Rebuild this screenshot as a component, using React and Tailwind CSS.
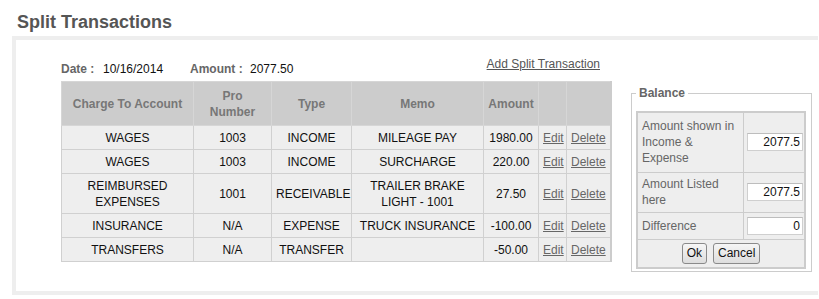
const rows = [
  { account: 'WAGES', pro: '1003', type: 'INCOME', memo: 'MILEAGE PAY', amount: '1980.00', h: 'h-[24px]' },
  { account: 'WAGES', pro: '1003', type: 'INCOME', memo: 'SURCHARGE', amount: '220.00', h: 'h-[24px]' },
  { account: ['REIMBURSED', 'EXPENSES'], pro: '1001', type: 'RECEIVABLE', memo: ['TRAILER BRAKE', 'LIGHT - 1001'], amount: '27.50', h: 'h-[40px]' },
  { account: 'INSURANCE', pro: 'N/A', type: 'EXPENSE', memo: 'TRUCK INSURANCE', amount: '-100.00', h: 'h-[24px]' },
  { account: 'TRANSFERS', pro: 'N/A', type: 'TRANSFER', memo: '', amount: '-50.00', h: 'h-[24px]' },
]

function Lines({ v }) {
  if (Array.isArray(v)) return v.map((l, i) => <div key={i}>{l}</div>)
  return v
}

export default function App() {
  const td = 'border border-[#d0d0d0] text-center align-middle px-1'
  const th = 'border border-[#d6d6d6] text-center align-middle font-bold text-[#777] px-1'
  const input = 'w-[56px] h-[18px] border border-[#cfcfcf] border-t-[#bdbdbd] bg-white text-right pr-[2px] text-[12px] text-[#111] outline-none'
  const btn = 'h-[21px] px-[4px] rounded-[3px] border border-[#8a8a8a] bg-gradient-to-b from-[#f6f6f6] to-[#dddddd] text-[12px] text-[#111]'
  return (
    <div className="w-[819px] h-[299px] overflow-hidden bg-white font-['Liberation_Sans',Arial,sans-serif] text-[12px] leading-4 text-[#111]">
      <div className="pt-[10px] pl-[17px]">
        <h1 className="text-[18px] leading-[24px] font-bold text-[#555]">Split Transactions</h1>
      </div>
      <div className="mt-[2px] ml-[12px] w-[806px] h-[259px] border-[4px] border-r-0 border-[#eeeeee] flex">
        <div className="ml-[45px] w-[549px] flex flex-col">
          <div className="pt-[16px] flex justify-between">
            <div className="mt-[5px] flex">
              <span className="w-[42px] font-bold text-[#666]">Date :</span>
              <span className="w-[87px]">10/16/2014</span>
              <span className="w-[60px] font-bold text-[#666]">Amount :</span>
              <span>2077.50</span>
            </div>
            <a href="#" className="mr-[10px] text-[#555] underline">Add Split Transaction</a>
          </div>
          <table className="mt-[4px] w-[549px] border-collapse border-r-2 border-r-[#cccccc] table-fixed">
            <colgroup>
              <col className="w-[132px]" />
              <col className="w-[78px]" />
              <col className="w-[80px]" />
              <col className="w-[132px]" />
              <col className="w-[55px]" />
              <col className="w-[28px]" />
              <col className="w-[44px]" />
            </colgroup>
            <thead>
              <tr className="h-[44px] bg-[#cccccc]">
                <th className={th}>Charge To Account</th>
                <th className={th}>Pro<br />Number</th>
                <th className={th}>Type</th>
                <th className={th}>Memo</th>
                <th className={th}>Amount</th>
                <th className={th}></th>
                <th className={th}></th>
              </tr>
            </thead>
            <tbody>
              {rows.map((r, i) => (
                <tr key={i} className={`${r.h} bg-[#eeeeee]`}>
                  <td className={td}><Lines v={r.account} /></td>
                  <td className={td}>{r.pro}</td>
                  <td className={td}>{r.type}</td>
                  <td className={td}><Lines v={r.memo} /></td>
                  <td className={td}>{r.amount}</td>
                  <td className={`${td} px-0`}><a href="#" className="text-[#666] underline">Edit</a></td>
                  <td className={`${td} px-0`}><a href="#" className="text-[#666] underline">Delete</a></td>
                </tr>
              ))}
            </tbody>
          </table>
        </div>
        <fieldset className="ml-[21px] mt-[45px] w-[181px] self-start border border-[#cccccc] pl-[4px] pb-[2px] pt-[10px]">
          <legend className="px-[3px] font-bold text-[#666]">Balance</legend>
          <table className="w-[170px] border-collapse border-2 border-[#cccccc] text-[#666]">
            <tbody>
              <tr className="h-[60px] bg-[#eeeeee]">
                <td className="w-[107px] border border-[#cccccc] px-[4px] align-middle">Amount shown in Income &amp; Expense</td>
                <td className="border border-[#cccccc] pl-[3px] pr-[1px] align-middle">
                  <input readOnly value="2077.5" className={input} />
                </td>
              </tr>
              <tr className="h-[40px] bg-[#eeeeee]">
                <td className="border border-[#cccccc] px-[4px] align-middle">Amount Listed here</td>
                <td className="border border-[#cccccc] pl-[3px] pr-[1px] align-middle">
                  <input readOnly value="2077.5" className={input} />
                </td>
              </tr>
              <tr className="h-[27px] bg-[#eeeeee]">
                <td className="border border-[#cccccc] px-[4px] align-middle">Difference</td>
                <td className="border border-[#cccccc] pl-[3px] pr-[1px] align-middle">
                  <input readOnly value="0" className={input} />
                </td>
              </tr>
              <tr className="h-[29px] bg-[#eeeeee]">
                <td colSpan={2} className="border border-[#cccccc] align-middle">
                  <div className="flex justify-center gap-[6px]">
                    <button className={btn}>Ok</button>
                    <button className={btn}>Cancel</button>
                  </div>
                </td>
              </tr>
            </tbody>
          </table>
        </fieldset>
      </div>
    </div>
  )
}
